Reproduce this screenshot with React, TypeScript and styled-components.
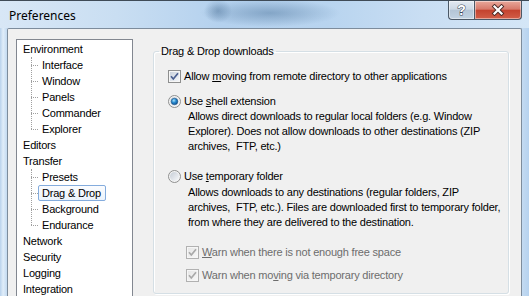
import React from "react";
import styled, { createGlobalStyle } from "styled-components";

const GlobalStyle = createGlobalStyle`
  html, body { margin: 0; padding: 0; }
  body { width: 529px; height: 296px; overflow: hidden; background: #c6dcf2; }
`;

const Window = styled.div`
  width: 529px;
  height: 296px;
  box-sizing: border-box;
  display: flex;
  flex-direction: column;
  overflow: hidden;
  border-top: 1px solid #3f4b57;
  font-family: "Liberation Sans", Arial, sans-serif;
  font-size: 11px;
  letter-spacing: -0.2px;
  color: #000;
  background:
    radial-gradient(ellipse 70px 14px at 270px 12px, rgba(70, 110, 150, 0.45), rgba(70, 110, 150, 0)),
    radial-gradient(ellipse 14px 12px at 218px 10px, rgba(40, 80, 120, 0.35), rgba(40, 80, 120, 0)),
    linear-gradient(90deg, #d8e7f6 0%, #c9def2 22%, #b4d1ee 42%, #b8d4ef 62%, #c9def3 80%, #d4e6f7 100%);
`;

const TitleBar = styled.div`
  height: 27px;
  display: flex;
  align-items: flex-start;
  flex-shrink: 0;
`;

const Title = styled.div`
  font-family: "Noto Sans", "Open Sans", sans-serif;
  font-size: 12px;
  letter-spacing: 0;
  line-height: 16px;
  margin: 7px 0 0 9px;
  color: #000;
`;

const CaptionButtons = styled.div`
  margin-left: auto;
  margin-right: 7px;
  display: flex;
`;

const CaptionButton = styled.div<{ $kind: "help" | "close" }>`
  height: 19px;
  width: ${(p) => (p.$kind === "help" ? "26px" : "48px")};
  box-sizing: border-box;
  display: flex;
  align-items: center;
  justify-content: center;
  border: 1px solid #4b5866;
  border-top: none;
  ${(p) => (p.$kind === "help" ? "border-right: none;" : "")}
  border-radius: ${(p) => (p.$kind === "help" ? "0 0 0 4px" : "0 0 4px 0")};
  box-shadow: inset 0 0 0 1px rgba(255, 255, 255, 0.45);
  background: ${(p) =>
    p.$kind === "help"
      ? "linear-gradient(#e3eaf2, #cdd9e5 45%, #b4c5d6 52%, #c2d2e2)"
      : "linear-gradient(#e8a89b, #d77a6b 45%, #c4432f 52%, #d25e48)"};
`;

const HelpGlyph = styled.span`
  font-family: "Liberation Sans", Arial, sans-serif;
  font-weight: bold;
  font-size: 14px;
  line-height: 14px;
  color: #fff;
  -webkit-text-stroke: 1px #3b4654;
  paint-order: stroke fill;
`;

const FrameRow = styled.div`
  flex: 1;
  display: flex;
  min-height: 0;
`;

const Glass = styled.div<{ $side: "left" | "right" }>`
  width: 7px;
  flex-shrink: 0;
  background: ${(p) =>
    p.$side === "left"
      ? "linear-gradient(90deg, #b9d2ec, #e0edf9 45%, #c3daf1)"
      : "linear-gradient(90deg, #c3daf1, #b6d2ef)"};
`;

const Client = styled.div`
  flex: 1;
  display: flex;
  align-items: flex-start;
  background: #f0f0f0;
  border: 1px solid #7d8c9c;
  border-bottom: none;
  border-radius: 2px 2px 0 0;
`;

const Tree = styled.div`
  width: 117px;
  height: 280px;
  box-sizing: border-box;
  margin: 10px 0 0 8px;
  padding-top: 1px;
  background: #fff;
  border: 1px solid #828790;
  flex-shrink: 0;
`;

const TreeGroup = styled.div`
  position: relative;
  &::before {
    content: "";
    position: absolute;
    left: 14px;
    top: 0;
    bottom: 8px;
    border-left: 1px dotted #a0a0a0;
  }
`;

const TreeRow = styled.div<{ $level: number }>`
  height: 16px;
  display: flex;
  align-items: center;
  position: relative;
  padding-left: ${(p) => (p.$level === 0 ? "2px" : "21px")};
  ${(p) =>
    p.$level > 0
      ? `&::before {
    content: "";
    position: absolute;
    left: 14px;
    top: 8px;
    width: 7px;
    border-top: 1px dotted #a0a0a0;
  }`
      : ""}
`;

const TreeLabel = styled.span<{ $selected?: boolean }>`
  display: inline-block;
  height: 16px;
  line-height: 14px;
  box-sizing: border-box;
  padding: 0 4px 0 3px;
  border: 1px solid ${(p) => (p.$selected ? "#84acdd" : "transparent")};
  border-radius: 2px;
  background: ${(p) => (p.$selected ? "linear-gradient(#fbfcfe, #ebf3fc)" : "transparent")};
  white-space: nowrap;
`;

const GroupBox = styled.fieldset`
  width: 356px;
  height: 249px;
  box-sizing: border-box;
  margin: 16px 0 0 20px;
  padding: 0;
  border: 1px solid #d5dfe5;
  border-radius: 3px;
  box-shadow: 1px 1px 0 #fff, inset 1px 1px 0 #fff;
  min-width: 0;
`;

const Legend = styled.legend`
  margin-left: 5px;
  padding: 0 2px;
  line-height: 13px;
  font-size: 11px;
`;

const Option = styled.label<{ $indent: number; $gap: number; $disabled?: boolean }>`
  display: flex;
  align-items: center;
  gap: 3px;
  height: 13px;
  line-height: 13px;
  margin-left: ${(p) => p.$indent}px;
  margin-top: ${(p) => p.$gap}px;
  color: ${(p) => (p.$disabled ? "#6d6d6d" : "#000")};
  white-space: nowrap;
`;

const Description = styled.div<{ $gap: number }>`
  margin: ${(p) => p.$gap}px 0 0 34px;
  line-height: 15px;
  white-space: nowrap;
`;

const Key = styled.span`
  text-decoration: underline;
  text-underline-offset: 1px;
`;

const CheckBox: React.FC<{ disabled?: boolean }> = ({ disabled }) => (
  <svg width="13" height="13" viewBox="0 0 13 13">
    <defs>
      <linearGradient id={disabled ? "cbd" : "cbe"} x1="0" y1="0" x2="1" y2="1">
        <stop offset="0" stopColor={disabled ? "#e6e6e6" : "#c9d1dc"} />
        <stop offset="1" stopColor={disabled ? "#f7f7f7" : "#f4f6f9"} />
      </linearGradient>
    </defs>
    <rect x="0.5" y="0.5" width="12" height="12" fill="#f6f6f6" stroke={disabled ? "#b1b1b1" : "#8e8f8f"} />
    <rect x="2" y="2" width="9" height="9" fill={`url(#${disabled ? "cbd" : "cbe"})`} />
    <path
      d="M3 6.3 L5.3 9 L10 3.2"
      fill="none"
      stroke={disabled ? "#a9a9a9" : "#4a5f90"}
      strokeWidth="1.7"
    />
  </svg>
);

const Radio: React.FC<{ checked?: boolean }> = ({ checked }) => (
  <svg width="13" height="13" viewBox="0 0 13 13">
    <defs>
      <linearGradient id="rbg" x1="0" y1="0" x2="1" y2="1">
        <stop offset="0" stopColor="#c6cdd6" />
        <stop offset="1" stopColor="#f7f8fa" />
      </linearGradient>
      <radialGradient id="rdot" cx="0.4" cy="0.35" r="0.7">
        <stop offset="0" stopColor="#a9e2fb" />
        <stop offset="0.45" stopColor="#2a8cd0" />
        <stop offset="1" stopColor="#0c4b8c" />
      </radialGradient>
    </defs>
    <circle cx="6.5" cy="6.5" r="6" fill="#f4f4f4" stroke="#8e8f8f" />
    <circle cx="6.5" cy="6.5" r="4.5" fill="url(#rbg)" />
    {checked && <circle cx="6.5" cy="6.5" r="3.3" fill="url(#rdot)" stroke="#174a7c" strokeWidth="0.5" />}
  </svg>
);

const CloseGlyph: React.FC = () => (
  <svg width="14" height="12" viewBox="0 0 14 12">
    <path d="M3.5 2.5 L10.5 9.5 M10.5 2.5 L3.5 9.5" stroke="#4a2a26" strokeWidth="4" strokeLinecap="square" />
    <path d="M3.5 2.5 L10.5 9.5 M10.5 2.5 L3.5 9.5" stroke="#fff" strokeWidth="2.2" strokeLinecap="square" />
  </svg>
);

const App: React.FC = () => {
  return (
    <>
      <GlobalStyle />
      <Window>
        <TitleBar>
          <Title>Preferences</Title>
          <CaptionButtons>
            <CaptionButton $kind="help">
              <HelpGlyph>?</HelpGlyph>
            </CaptionButton>
            <CaptionButton $kind="close">
              <CloseGlyph />
            </CaptionButton>
          </CaptionButtons>
        </TitleBar>
        <FrameRow>
          <Glass $side="left" />
          <Client>
            <Tree>
              <TreeRow $level={0}><TreeLabel>Environment</TreeLabel></TreeRow>
              <TreeGroup>
                <TreeRow $level={1}><TreeLabel>Interface</TreeLabel></TreeRow>
                <TreeRow $level={1}><TreeLabel>Window</TreeLabel></TreeRow>
                <TreeRow $level={1}><TreeLabel>Panels</TreeLabel></TreeRow>
                <TreeRow $level={1}><TreeLabel>Commander</TreeLabel></TreeRow>
                <TreeRow $level={1}><TreeLabel>Explorer</TreeLabel></TreeRow>
              </TreeGroup>
              <TreeRow $level={0}><TreeLabel>Editors</TreeLabel></TreeRow>
              <TreeRow $level={0}><TreeLabel>Transfer</TreeLabel></TreeRow>
              <TreeGroup>
                <TreeRow $level={1}><TreeLabel>Presets</TreeLabel></TreeRow>
                <TreeRow $level={1}><TreeLabel $selected>Drag &amp; Drop</TreeLabel></TreeRow>
                <TreeRow $level={1}><TreeLabel>Background</TreeLabel></TreeRow>
                <TreeRow $level={1}><TreeLabel>Endurance</TreeLabel></TreeRow>
              </TreeGroup>
              <TreeRow $level={0}><TreeLabel>Network</TreeLabel></TreeRow>
              <TreeRow $level={0}><TreeLabel>Security</TreeLabel></TreeRow>
              <TreeRow $level={0}><TreeLabel>Logging</TreeLabel></TreeRow>
              <TreeRow $level={0}><TreeLabel>Integration</TreeLabel></TreeRow>
            </Tree>
            <GroupBox>
              <Legend>Drag &amp; Drop downloads</Legend>
              <Option $indent={14} $gap={12}>
                <CheckBox />
                <span>Allow <Key>m</Key>oving from remote directory to other applications</span>
              </Option>
              <Option $indent={14} $gap={12}>
                <Radio checked />
                <span>Use <Key>s</Key>hell extension</span>
              </Option>
              <Description $gap={1}>
                Allows direct downloads to regular local folders (e.g. Window
                <br />
                Explorer). Does not allow downloads to other destinations (ZIP
                <br />
                archives,&nbsp; FTP, etc.)
              </Description>
              <Option $indent={14} $gap={16}>
                <Radio />
                <span>Use <Key>t</Key>emporary folder</span>
              </Option>
              <Description $gap={2}>
                Allows downloads to any destinations (regular folders, ZIP
                <br />
                archives,&nbsp; FTP, etc.). Files are downloaded first to temporary folder,
                <br />
                from where they are delivered to the destination.
              </Description>
              <Option $indent={32} $gap={16} $disabled>
                <CheckBox disabled />
                <span><Key>W</Key>arn when there is not enough free space</span>
              </Option>
              <Option $indent={32} $gap={10} $disabled>
                <CheckBox disabled />
                <span>Warn when mo<Key>v</Key>ing via temporary directory</span>
              </Option>
            </GroupBox>
          </Client>
          <Glass $side="right" />
        </FrameRow>
      </Window>
    </>
  );
};

export default App;
